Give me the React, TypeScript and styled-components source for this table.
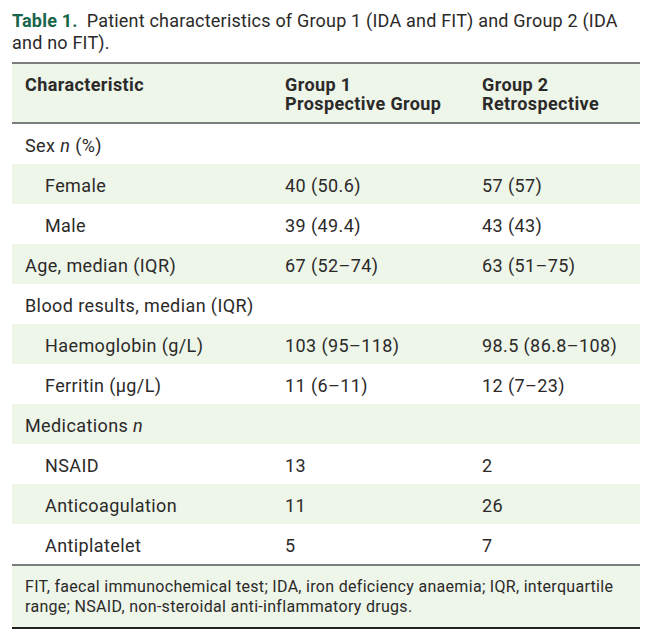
import React from "react";
import styled, { createGlobalStyle } from "styled-components";

const GlobalStyle = createGlobalStyle`
  html, body {
    margin: 0;
    padding: 0;
    background: #ffffff;
  }
  body {
    font-family: Roboto, "Liberation Sans", sans-serif;
    color: #2b2a29;
  }
`;

const Page = styled.div`
  width: 628px;
  padding: 10px 0 0 12px;
`;

const Caption = styled.p`
  margin: 0 0 8px;
  font-size: 18px;
  letter-spacing: 0.2px;
  line-height: 22px;
  color: #2b2a29;
`;

const CaptionLabel = styled.strong`
  display: inline-block;
  font-weight: 700;
  color: #17664a;
  margin-right: 9px;
`;

const CaptionText = styled.span``;

const Table = styled.table`
  width: 628px;
  border-collapse: collapse;
  table-layout: fixed;
  font-size: 18px;
  letter-spacing: 0.4px;
  line-height: 20px;
`;

const HeadRow = styled.tr`
  background: #eef5e9;
  border-top: 2px solid #7d7d7d;
  border-bottom: 2px solid #7d7d7d;
`;

const HeadCell = styled.th`
  text-align: left;
  vertical-align: top;
  font-weight: 700;
  line-height: 19px;
  padding: 11px 0 9px 13px;
`;

const Row = styled.tr<{ $striped: boolean }>`
  background: ${(p) => (p.$striped ? "#eef5e9" : "#ffffff")};
  height: 40px;
`;

const Cell = styled.td<{ $indent?: boolean }>`
  padding: 12px 0 8px ${(p) => (p.$indent ? "33px" : "13px")};
  vertical-align: top;
  white-space: nowrap;
`;

const FootRow = styled.tr`
  background: #eef5e9;
  border-top: 2px solid #7d7d7d;
  border-bottom: 2px solid #222222;
`;

const FootCell = styled.td`
  padding: 11px 12px 10px 13px;
  font-size: 16px;
  letter-spacing: 0.3px;
  line-height: 20px;
`;

type Line = { label: React.ReactNode; g1?: string; g2?: string; indent?: boolean };

const lines: Line[] = [
  { label: <>Sex <i>n</i> (%)</> },
  { label: "Female", g1: "40 (50.6)", g2: "57 (57)", indent: true },
  { label: "Male", g1: "39 (49.4)", g2: "43 (43)", indent: true },
  { label: "Age, median (IQR)", g1: "67 (52–74)", g2: "63 (51–75)" },
  { label: "Blood results, median (IQR)" },
  { label: "Haemoglobin (g/L)", g1: "103 (95–118)", g2: "98.5 (86.8–108)", indent: true },
  { label: "Ferritin (µg/L)", g1: "11 (6–11)", g2: "12 (7–23)", indent: true },
  { label: <>Medications <i>n</i></> },
  { label: "NSAID", g1: "13", g2: "2", indent: true },
  { label: "Anticoagulation", g1: "11", g2: "26", indent: true },
  { label: "Antiplatelet", g1: "5", g2: "7", indent: true },
];

export default function App() {
  return (
    <Page>
      <GlobalStyle />
      <Caption>
        <CaptionLabel>Table 1.</CaptionLabel>
        <CaptionText>
          Patient characteristics of Group 1 (IDA and FIT) and Group 2 (IDA and no FIT).
        </CaptionText>
      </Caption>
      <Table>
        <colgroup>
          <col style={{ width: 260 }} />
          <col style={{ width: 197 }} />
          <col style={{ width: 171 }} />
        </colgroup>
        <thead>
          <HeadRow>
            <HeadCell>Characteristic</HeadCell>
            <HeadCell>
              Group 1
              <br />
              Prospective Group
            </HeadCell>
            <HeadCell>
              Group 2
              <br />
              Retrospective
            </HeadCell>
          </HeadRow>
        </thead>
        <tbody>
          {lines.map((l, i) => (
            <Row key={i} $striped={i % 2 === 1}>
              <Cell $indent={l.indent}>{l.label}</Cell>
              <Cell>{l.g1}</Cell>
              <Cell>{l.g2}</Cell>
            </Row>
          ))}
        </tbody>
        <tfoot>
          <FootRow>
            <FootCell colSpan={3}>
              FIT, faecal immunochemical test; IDA, iron deficiency anaemia; IQR, interquartile
              range; NSAID, non-steroidal anti-inflammatory drugs.
            </FootCell>
          </FootRow>
        </tfoot>
      </Table>
    </Page>
  );
}
